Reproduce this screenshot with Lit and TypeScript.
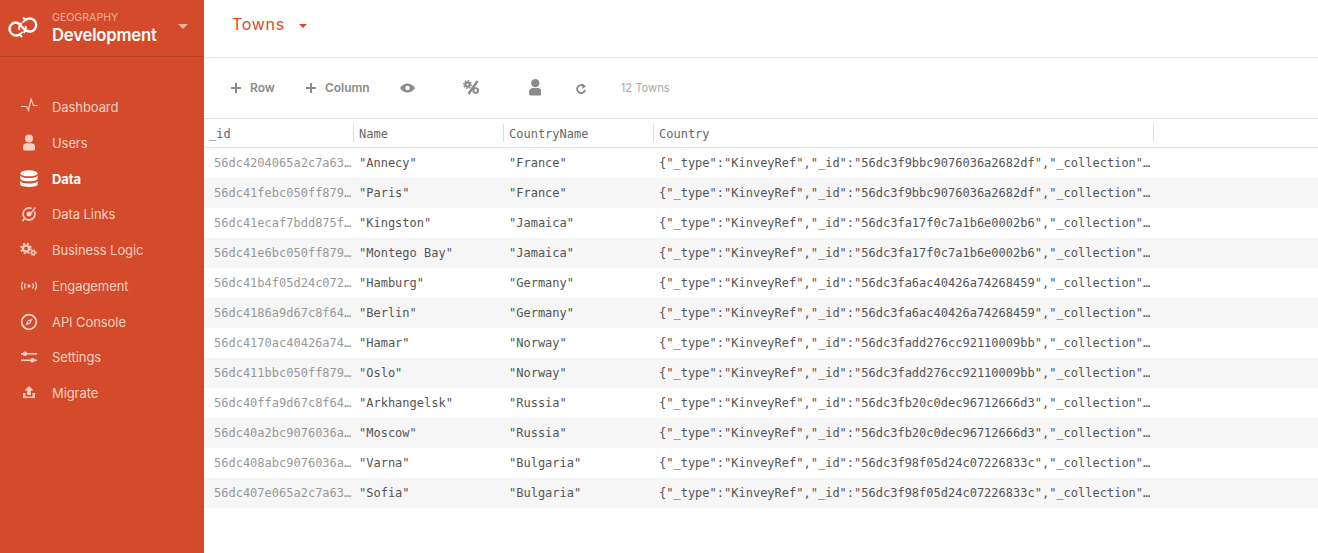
import { LitElement, html, css, svg } from "lit";
import { customElement } from "lit/decorators.js";

const icons: Record<string, unknown> = {
  pulse: svg`<polyline points="1,8.5 6.5,8.5 8.5,12.5 11,1 13.5,7.5 17.5,7.5" fill="none" stroke="currentColor" stroke-width="1.2"/>`,
  user: svg`<circle cx="9" cy="4.500" r="4"/><path d="M3 12.500c0-2 2-3.200 3.500-3.200h5c1.500 0 3.500 1.200 3.500 3.200v2.500c0 1-1 1.500-2 1.500H5c-1 0-2-.5-2-1.500z"/>`,
  data: svg`<ellipse cx="9" cy="3.300" rx="8.700" ry="3"/><path d="M.3 5.500C1.500 7.500 5 8 9 8s7.500-.5 8.700-2.500v3.200C16.500 10.800 13 11.300 9 11.300S1.500 10.800.3 8.700z"/><path d="M.3 11C1.500 13 5 13.500 9 13.500s7.500-.5 8.700-2.500v3.600c0 1.500-4 2.400-8.700 2.400S.3 16.100.3 14.600z"/>`,
  links: svg`<path d="M14.500 6.500A6 6 0 1 1 11.500 3.500" fill="none" stroke="currentColor" stroke-width="1.800"/><circle cx="9" cy="9" r="2.500"/><path d="M10 8l5-6 1 1-5 6z"/><path d="M5 13l-2.500 3" stroke="currentColor" stroke-width="1.800"/>`,
  gears: svg`<circle cx="6" cy="7.500" r="3.100" fill="none" stroke="currentColor" stroke-width="2.400"/><circle cx="6" cy="7.500" r="5" fill="none" stroke="currentColor" stroke-width="1.500" stroke-dasharray="2 2"/><circle cx="13.300" cy="11.700" r="1.700" fill="none" stroke="currentColor" stroke-width="1.500"/><circle cx="13.300" cy="11.700" r="2.900" fill="none" stroke="currentColor" stroke-width="1" stroke-dasharray="1.400 1.300"/>`,
  signal: svg`<circle cx="9" cy="9" r="1.700"/><path d="M5.500 6.500a4 4 0 0 0 0 5M12.500 6.500a4 4 0 0 1 0 5M2.800 4.800a8 8 0 0 0 0 8.400M15.200 4.800a8 8 0 0 1 0 8.400" fill="none" stroke="currentColor" stroke-width="1.300"/>`,
  compass: svg`<circle cx="9" cy="9" r="7.300" fill="none" stroke="currentColor" stroke-width="1.800"/><path d="M12.500 5.500l-5 2-2 5 5-2zM9 8a1 1 0 1 1 0 2 1 1 0 0 1 0-2z" fill-rule="evenodd"/>`,
  sliders: svg`<rect x="1" y="5" width="16" height="1.600"/><rect x="1" y="11.500" width="16" height="1.600"/><circle cx="5" cy="5.800" r="2.200"/><circle cx="12.500" cy="12.300" r="2.200"/>`,
  upload: svg`<path d="M9 2l4.500 4.500h-2.700V11H7.200V6.500H4.500z"/><path d="M3 9h2.500v3.500h7V9H15v5H3z"/>`,
  plus: svg`<rect x="5" y="1" width="2" height="10"/><rect x="1" y="5" width="10" height="2"/>`,
  eye: svg`<path fill-rule="evenodd" d="M0 5C2 2 4.800.5 7.500.5S13 2 15 5c-2 3-4.800 4.500-7.500 4.500S2 8 0 5zm7.500-2.300a2.300 2.300 0 1 0 0 4.600 2.300 2.300 0 0 0 0-4.600z"/>`,
  percent: svg`<path d="M14.500 1L5.500 14" stroke="currentColor" stroke-width="2.400"/><circle cx="12.700" cy="10.500" r="2.400" fill="none" stroke="currentColor" stroke-width="1.900"/><circle cx="4.500" cy="4.500" r="2.200" fill="none" stroke="currentColor" stroke-width="2.200"/><circle cx="4.500" cy="4.500" r="3.900" fill="none" stroke="currentColor" stroke-width="1.300" stroke-dasharray="1.500 1.500"/>`,
  refresh: svg`<path d="M8 3.300A4 4 0 1 0 9 7" fill="none" stroke="currentColor" stroke-width="1.900"/><path d="M6 .5L10 3.300 6.500 6z"/>`,
};

const nav = [
  { label: "Dashboard", icon: "pulse" },
  { label: "Users", icon: "user" },
  { label: "Data", icon: "data", active: true },
  { label: "Data Links", icon: "links" },
  { label: "Business Logic", icon: "gears" },
  { label: "Engagement", icon: "signal" },
  { label: "API Console", icon: "compass" },
  { label: "Settings", icon: "sliders" },
  { label: "Migrate", icon: "upload" },
];

const ref = (id: string) =>
  `{"_type":"KinveyRef","_id":"${id}","_collection"…`;

const rows = [
  ["56dc4204065a2c7a63…", '"Annecy"', '"France"', "56dc3f9bbc9076036a2682df"],
  ["56dc41febc050ff879…", '"Paris"', '"France"', "56dc3f9bbc9076036a2682df"],
  ["56dc41ecaf7bdd875f…", '"Kingston"', '"Jamaica"', "56dc3fa17f0c7a1b6e0002b6"],
  ["56dc41e6bc050ff879…", '"Montego Bay"', '"Jamaica"', "56dc3fa17f0c7a1b6e0002b6"],
  ["56dc41b4f05d24c072…", '"Hamburg"', '"Germany"', "56dc3fa6ac40426a74268459"],
  ["56dc4186a9d67c8f64…", '"Berlin"', '"Germany"', "56dc3fa6ac40426a74268459"],
  ["56dc4170ac40426a74…", '"Hamar"', '"Norway"', "56dc3fadd276cc92110009bb"],
  ["56dc411bbc050ff879…", '"Oslo"', '"Norway"', "56dc3fadd276cc92110009bb"],
  ["56dc40ffa9d67c8f64…", '"Arkhangelsk"', '"Russia"', "56dc3fb20c0dec96712666d3"],
  ["56dc40a2bc9076036a…", '"Moscow"', '"Russia"', "56dc3fb20c0dec96712666d3"],
  ["56dc408abc9076036a…", '"Varna"', '"Bulgaria"', "56dc3f98f05d24c07226833c"],
  ["56dc407e065a2c7a63…", '"Sofia"', '"Bulgaria"', "56dc3f98f05d24c07226833c"],
];

@customElement("app-root")
export class AppRoot extends LitElement {
  static styles = css`
    :host {
      display: flex;
      height: 553px;
      overflow: hidden;
      background: #fff;
      font-family: Inter, "Liberation Sans", sans-serif;
    }

    svg {
      display: block;
      fill: currentColor;
    }

    .sidebar {
      width: 204px;
      flex: none;
      background: #d34b2a;
      color: #f7cfc3;
    }

    .brand {
      height: 57px;
      box-sizing: border-box;
      border-bottom: 1px solid #bb3f21;
      display: flex;
      align-items: center;
      padding: 0 16px 0 8px;
      color: #fff;
    }

    .brand-text {
      margin-left: 14px;
      flex: 1;
      padding-top: 1px;
    }

    .org {
      font-size: 10.6px;
      line-height: 12px;
      color: #f4ae99;
    }

    .env {
      font-size: 16.7px;
      line-height: 22px;
      font-weight: 600;
      letter-spacing: -0.2px;
    }

    .caret {
      width: 0;
      height: 0;
      border-left: 5px solid transparent;
      border-right: 5px solid transparent;
      border-top: 5px solid #f4ae99;
      margin-bottom: 4px;
    }

    nav {
      padding-top: 32.25px;
    }

    .nav-item {
      height: 35.75px;
      display: flex;
      align-items: center;
      padding-left: 20px;
      font-size: 13px;
      letter-spacing: -0.08px;
    }

    .nav-item svg {
      width: 18px;
      height: 18px;
      margin-right: 14px;
    }

    .nav-item.active {
      color: #fff;
      font-weight: 700;
    }

    main {
      flex: 1;
      min-width: 0;
    }

    .title-bar {
      height: 58px;
      box-sizing: border-box;
      border-bottom: 1px solid #e6e6e6;
      display: flex;
      align-items: center;
      padding: 0 0 10px 28px;
      color: #d34b2a;
      font-size: 16px;
      letter-spacing: 0.7px;
    }

    .title-bar .caret {
      margin: 4px 0 0 14px;
      border-left-width: 4px;
      border-right-width: 4px;
      border-top: 4px solid #d34b2a;
    }

    .toolbar {
      height: 61px;
      box-sizing: border-box;
      border-bottom: 1px solid #e2e2e2;
      display: flex;
      align-items: center;
      padding: 0 0 1px 26px;
      color: #8a8a8a;
      font-size: 12px;
      font-weight: 600;
    }

    .tool {
      display: flex;
      align-items: center;
    }

    .tool svg {
      margin-right: 8px;
    }

    .tool.add {
      margin-right: 30px;
    }

    .icon-eye {
      margin-right: 48px;
    }

    .icon-percent {
      margin-right: 49px;
    }

    .icon-user {
      margin-right: 34.5px;
    }

    .icon-refresh {
      margin-right: 34px;
    }

    .count {
      color: #a8a8a8;
      font-size: 11.2px;
      font-weight: 400;
    }

    .row {
      display: grid;
      grid-template-columns: 150px 150px 150px 500px;
      font-family: "DejaVu Sans Mono", monospace;
      font-size: 12px;
      white-space: nowrap;
    }

    .head {
      height: 29px;
      box-sizing: border-box;
      border-bottom: 1px solid #e2e2e2;
      color: #666;
      align-items: center;
      padding-bottom: 1px;
    }

    .head div {
      height: 18px;
      line-height: 21px;
      padding-left: 5px;
      border-right: 1px solid #dedede;
    }

    .body-row {
      height: 30px;
      line-height: 30px;
      color: #555;
    }

    .body-row:nth-child(even) {
      background: #f6f6f6;
    }

    .body-row div {
      padding-left: 5px;
    }

    .body-row .id {
      padding-left: 10px;
      color: #999;
    }
  `;

  icon(name: string, w = 18, h = 18, box = "0 0 18 18") {
    return html`<svg width=${w} height=${h} viewBox=${box}>${icons[name]}</svg>`;
  }

  render() {
    return html`
      <aside class="sidebar">
        <div class="brand">
          <svg width="30" height="24" viewBox="8 16 30 24">
            <g fill="none" stroke="currentColor" stroke-width="2.300">
              <path d="M19.500 34.500A6.500 6.500 0 1 1 15.500 22.500C19 22.500 20.500 25 22.500 27.500S26.500 31.500 30 31.500A6.500 6.500 0 1 0 25.500 20" />
              <path d="M19.500 30C18.500 27.500 20 24.500 21.500 23M25.500 26C26.500 28.500 25 31.500 23.500 33" stroke-width="1.800" />
              <path d="M23 17.500L25.500 20 22.500 22.500M22 37L19.500 34.500 22.500 32" stroke-width="1.900" />
            </g>
          </svg>
          <div class="brand-text">
            <div class="org">GEOGRAPHY</div>
            <div class="env">Development</div>
          </div>
          <span class="caret"></span>
        </div>
        <nav>
          ${nav.map(
            (item) => html`
              <div class="nav-item ${item.active ? "active" : ""}">
                ${this.icon(item.icon)}<span>${item.label}</span>
              </div>
            `,
          )}
        </nav>
      </aside>
      <main>
        <div class="title-bar">Towns<span class="caret"></span></div>
        <div class="toolbar">
          <div class="tool add">${this.icon("plus", 12, 12, "0 0 12 12")}Row</div>
          <div class="tool add">${this.icon("plus", 12, 12, "0 0 12 12")}Column</div>
          <div class="icon-eye">${this.icon("eye", 15, 10, "0 0 15 10")}</div>
          <div class="icon-percent">${this.icon("percent", 17, 15, "0 0 17 15")}</div>
          <div class="icon-user">${this.icon("user", 12.5, 16.5, "3 0.5 12 16")}</div>
          <div class="icon-refresh">${this.icon("refresh", 11, 12, "0 -1 11 12")}</div>
          <div class="count">12 Towns</div>
        </div>
        <div class="row head">
          <div>_id</div>
          <div>Name</div>
          <div>CountryName</div>
          <div>Country</div>
        </div>
        <div class="rows">
          ${rows.map(
            (r) => html`
              <div class="row body-row">
                <div class="id">${r[0]}</div>
                <div>${r[1]}</div>
                <div>${r[2]}</div>
                <div>${ref(r[3])}</div>
              </div>
            `,
          )}
        </div>
      </main>
    `;
  }
}
